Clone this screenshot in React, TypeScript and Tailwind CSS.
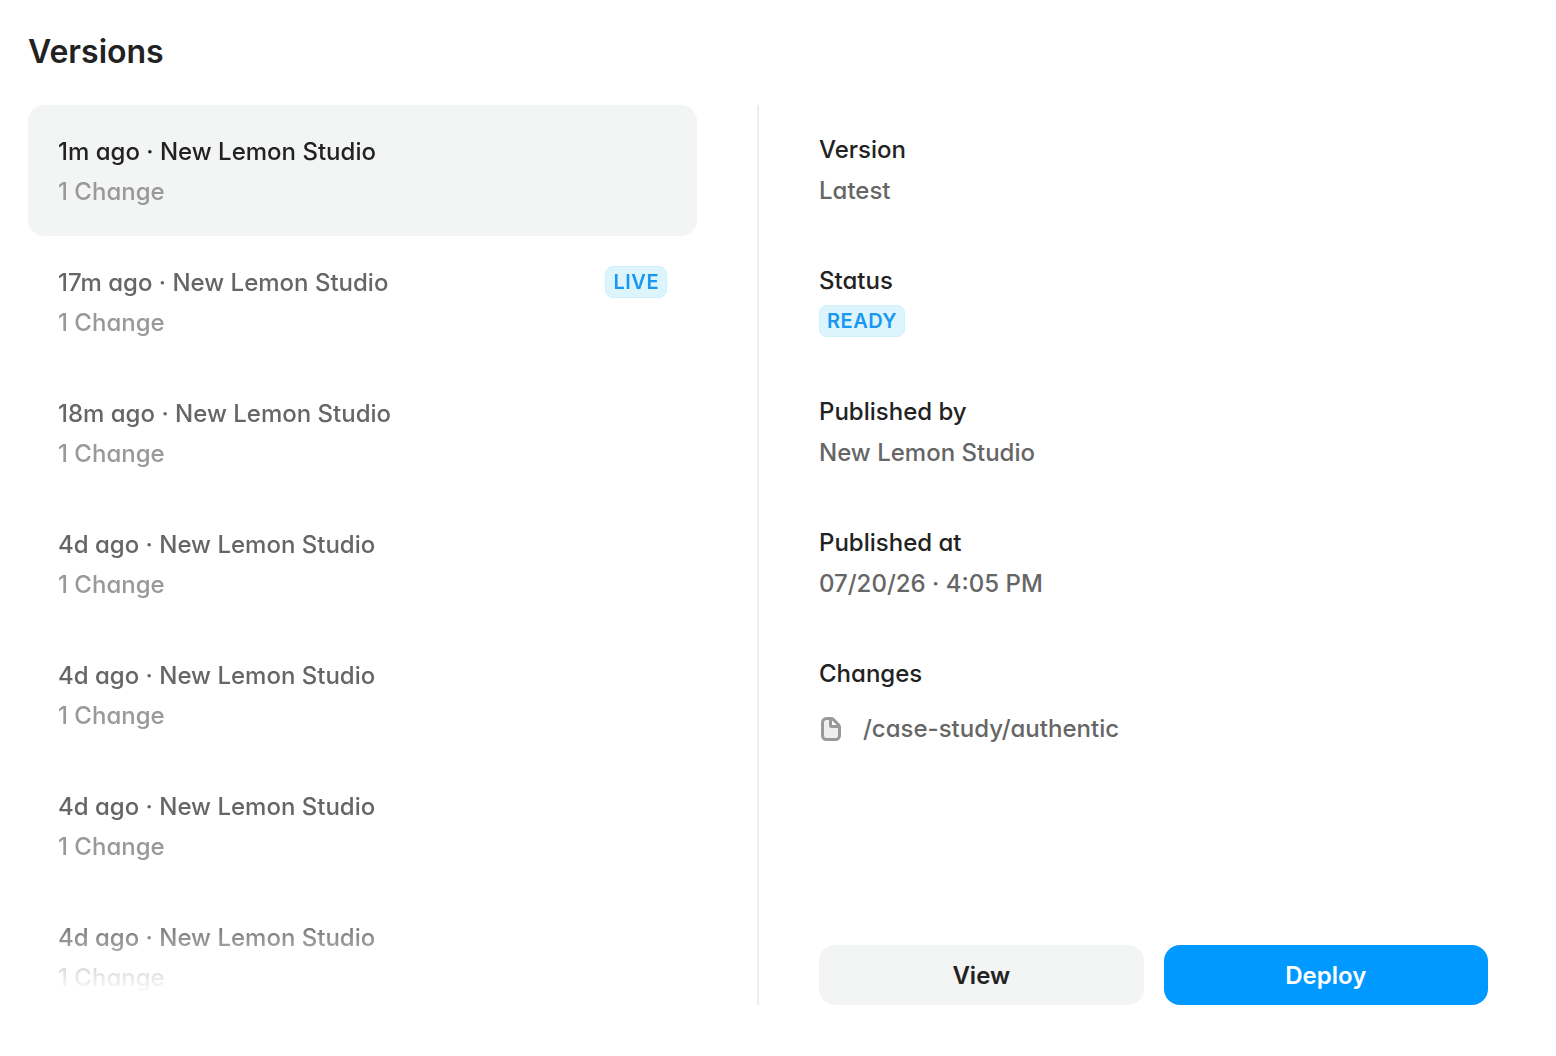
import { useState } from "react";

const STUDIO = "New Lemon Studio";

interface Version {
  id: number;
  age: string;
  live?: boolean;
}

const VERSIONS: Version[] = [
  { id: 1, age: "1m ago" },
  { id: 2, age: "17m ago", live: true },
  { id: 3, age: "18m ago" },
  { id: 4, age: "4d ago" },
  { id: 5, age: "4d ago" },
  { id: 6, age: "4d ago" },
  { id: 7, age: "4d ago" },
];

function Badge({ label }: { label: string }) {
  return (
    <span className="inline-flex h-8 items-center rounded-lg border border-[#cdf0fa] bg-[#dcf5fc] px-[7px] text-xl leading-none font-semibold tracking-wide text-[#1a97f0]">
      {label}
    </span>
  );
}

interface VersionRowProps {
  version: Version;
  active: boolean;
  onClick: () => void;
}

function VersionRow({ version, active, onClick }: VersionRowProps) {
  return (
    <li>
      <button
        type="button"
        onClick={onClick}
        className={`flex w-full items-start justify-between rounded-2xl px-[30px] pt-[27px] pb-6 text-left ${
          active ? "bg-[#f3f4f4] text-[#222222]" : "text-[#666666]"
        }`}
      >
        <span>
          <span className="block leading-10">
            {version.age} · {STUDIO}
          </span>
          <span className="block leading-10 text-[#999999]">1 Change</span>
        </span>
        {version.live && (
          <span className="flex h-[38px] items-center">
            <Badge label="LIVE" />
          </span>
        )}
      </button>
    </li>
  );
}

function Detail({ label, children }: { label: string; children: React.ReactNode }) {
  return (
    <div className="h-[131px]">
      <dt className="leading-10 text-[#222222]">{label}</dt>
      <dd className="leading-[42px]">{children}</dd>
    </div>
  );
}

function PageIcon() {
  return (
    <svg width="24" height="28" viewBox="0 0 24 28" fill="none" aria-hidden="true">
      <path
        d="M3.5 7.5a4 4 0 0 1 4-4h4.6a3 3 0 0 1 2.1.9l5.4 5.4a3 3 0 0 1 .9 2.1v8.6a4 4 0 0 1-4 4h-9a4 4 0 0 1-4-4z"
        fill="#eeeeee"
      />
      <path d="M12 4v7h8z" fill="#ffffff" />
      <path
        d="M3.5 7.5a4 4 0 0 1 4-4h4.6a3 3 0 0 1 2.1.9l5.4 5.4a3 3 0 0 1 .9 2.1v8.6a4 4 0 0 1-4 4h-9a4 4 0 0 1-4-4zM11.5 3.5v7a1 1 0 0 0 1 1h7.5"
        stroke="#999999"
        strokeWidth="3"
      />
    </svg>
  );
}

export default function App() {
  const [selected, setSelected] = useState(1);

  return (
    <main className="min-h-screen bg-white pt-[27px] pr-[68px] pb-[51px] pl-7 font-['Inter',sans-serif] text-2xl font-medium text-[#666666] [font-feature-settings:'cv11']">
      <h1 className="text-[32px] leading-[50px] font-semibold text-[#222222]">Versions</h1>

      <div className="mt-7 flex h-[900px]">
        <ul className="flex-1 overflow-hidden mask-b-from-[812px] mask-b-to-[890px]">
          {VERSIONS.map((v) => (
            <VersionRow
              key={v.id}
              version={v}
              active={v.id === selected}
              onClick={() => setSelected(v.id)}
            />
          ))}
        </ul>

        <section className="ml-[60px] flex flex-1 flex-col border-l-2 border-[#eeeeee] pt-[25px] pl-[60px]">
          <dl>
            <Detail label="Version">Latest</Detail>
            <Detail label="Status">
              <span className="flex h-10 items-center">
                <Badge label="READY" />
              </span>
            </Detail>
            <Detail label="Published by">{STUDIO}</Detail>
            <Detail label="Published at">07/20/26 · 4:05 PM</Detail>
            <Detail label="Changes">
              <span className="mt-3.5 flex items-center gap-5">
                <PageIcon />
                /case-study/authentic
              </span>
            </Detail>
          </dl>

          <div className="mt-auto flex gap-5 font-semibold">
            <button type="button" className="h-[60px] flex-1 rounded-2xl bg-[#f3f4f4] pt-0.5 text-[#222222]">
              View
            </button>
            <button type="button" className="h-[60px] flex-1 rounded-2xl bg-[#0099ff] pt-0.5 text-white">
              Deploy
            </button>
          </div>
        </section>
      </div>
    </main>
  );
}
